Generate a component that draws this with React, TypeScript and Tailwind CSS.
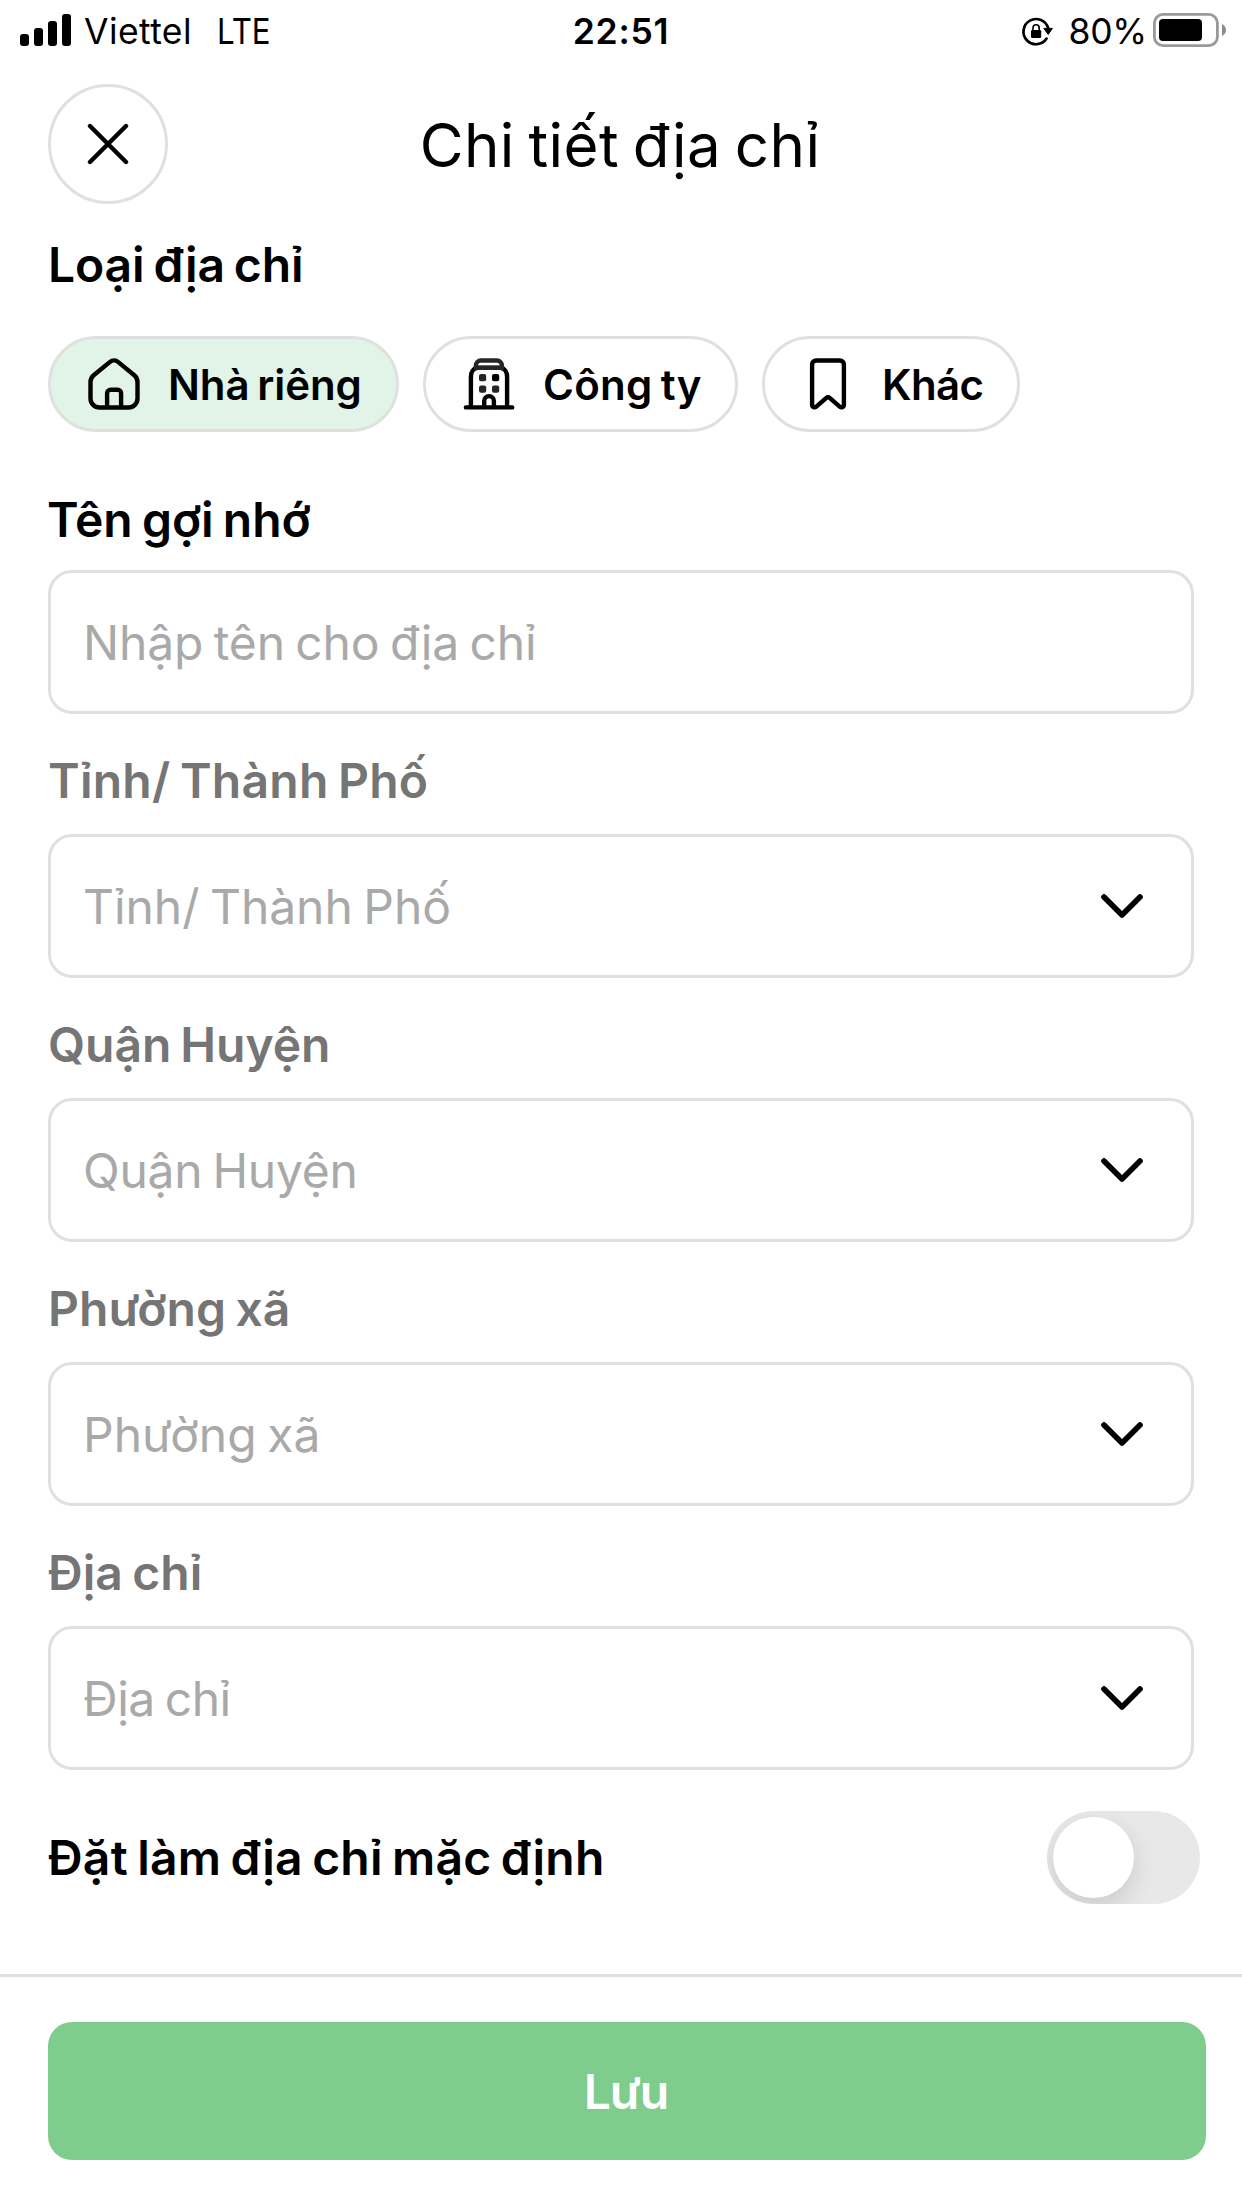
import React, { useState } from "react";

function SignalBars() {
  return (
    <div className="flex h-8 items-end gap-[5px]">
      <span className="h-3 w-[9px] rounded-[3px] bg-black" />
      <span className="h-[18px] w-[9px] rounded-[3px] bg-black" />
      <span className="h-[25px] w-[9px] rounded-[3px] bg-black" />
      <span className="h-8 w-[9px] rounded-[3px] bg-black" />
    </div>
  );
}

function RotationLock() {
  return (
    <svg className="h-8 w-8" viewBox="0 0 32 32" fill="none">
      <path d="M25.6 23.6A12.6 12.6 0 1 1 27.2 13.2" stroke="#000" strokeWidth="2.7" strokeLinecap="round" />
      <path d="M22.8 13.4h8.6l-4.2 6z" fill="#000" stroke="#000" strokeWidth="1" strokeLinejoin="round" />
      <rect x="10" y="15" width="10.2" height="8" rx="1.2" fill="#000" />
      <path d="M12 15.5v-2.6a3.1 3.1 0 0 1 6.2 0v2.6" stroke="#000" strokeWidth="1.6" />
    </svg>
  );
}

function Battery() {
  return (
    <svg className="h-[34px] w-[74px]" viewBox="0 0 74 34" fill="none">
      <rect x="1.4" y="1.4" width="63" height="31.2" rx="8.6" stroke="#999" strokeWidth="2.8" />
      <rect x="6" y="6" width="43" height="22" rx="4" fill="#000" />
      <path d="M69 11c2.6 1.4 4 3.4 4 6s-1.400 4.600-4 6z" fill="#8c8c8c" />
    </svg>
  );
}

function StatusBar() {
  return (
    <div className="grid h-[62px] shrink-0 grid-cols-3 items-center text-[35.5px] leading-[60px]">
      <div className="flex items-center pl-5">
        <div className="-mt-0.5">
          <SignalBars />
        </div>
        <span className="ml-[13px] pt-0.5 tracking-[0.4px]">Viettel</span>
        <span className="ml-[25px] origin-left scale-x-88 pt-0.5">LTE</span>
      </div>
      <div className="pt-0.5 text-center font-semibold tracking-[0.7px]">22:51</div>
      <div className="flex items-center justify-end pr-[15px]">
        <RotationLock />
        <span className="mr-1.5 ml-[15px] pt-0.5 tracking-[-0.2px]">80%</span>
        <div className="-mt-0.5 flex">
          <Battery />
        </div>
      </div>
    </div>
  );
}

function HomeIcon() {
  return (
    <svg className="size-15 shrink-0" viewBox="0 0 60 60" fill="none" stroke="#000" strokeWidth="4.400" strokeLinejoin="round">
      <path d="M6.500 28.200c0-2.700 1.100-5.200 3.200-6.900L25.700 8.100a6.800 6.800 0 0 1 8.600 0l16 13.200c2.100 1.700 3.200 4.200 3.200 6.900v16.300a9 9 0 0 1-9 9h-29a9 9 0 0 1-9-9z" />
      <path d="M23.100 53.500V39.300a3.500 3.500 0 0 1 3.500-3.500h7a3.500 3.500 0 0 1 3.500 3.500v14.200" />
    </svg>
  );
}

function BuildingIcon() {
  return (
    <svg className="size-15 shrink-0" viewBox="0 0 60 60" fill="none" strokeWidth="4.400" strokeLinecap="round" strokeLinejoin="round">
      <path d="M6.900 53.400h46.300M11.900 53V23c0-5 2.400-8.600 6.400-9.200h23.400c4 .6 6.400 4.200 6.400 9.200v30" stroke="#000" />
      <path d="M16.900 13.900v-2.400a5 5 0 0 1 5-5h16a5 5 0 0 1 5 5v2.400z" stroke="#252622" />
      <path d="M25.200 53v-6a4.850 4.850 0 0 1 9.700 0v6" stroke="#000" />
      <rect x="20" y="20" width="7.200" height="7.200" rx="2" fill="#252622" />
      <rect x="33" y="20" width="7.200" height="7.200" rx="2" fill="#000" />
      <rect x="20" y="31.500" width="7.200" height="7.200" rx="2" fill="#252622" />
      <rect x="33" y="31.500" width="7.200" height="7.200" rx="2" fill="#252622" />
    </svg>
  );
}

function BookmarkIcon() {
  return (
    <svg className="size-15 shrink-0" viewBox="0 0 60 60" fill="none" stroke="#000" strokeWidth="4.400" strokeLinejoin="round">
      <path d="M14.100 10.500a4 4 0 0 1 4-4h23.800a4 4 0 0 1 4 4v40.300c0 2.400-2.600 3.200-4.200 1.800l-9.800-8.500a2.900 2.900 0 0 0-3.800 0l-9.800 8.500c-1.600 1.400-4.200.6-4.200-1.800z" />
    </svg>
  );
}

function ChevronDown() {
  return (
    <svg className="h-6 w-[42px]" viewBox="0 0 42 24" fill="none" stroke="#000" strokeWidth="5.600" strokeLinecap="round" strokeLinejoin="round">
      <path d="M3 3l18 18L39 3" />
    </svg>
  );
}

const kinds = [
  { label: "Nhà riêng", icon: <HomeIcon />, box: "w-[351px]", spacing: "tracking-[-0.05px]" },
  { label: "Công ty", icon: <BuildingIcon />, box: "w-[315px]", spacing: "tracking-[0.3px]" },
  { label: "Khác", icon: <BookmarkIcon />, box: "w-[258px]", spacing: "tracking-[-0.6px]" },
];

const selects = [
  { label: "Tỉnh/ Thành Phố", labelSpacing: "tracking-[0.25px]", valueSpacing: "tracking-[-0.05px]" },
  { label: "Quận Huyện", labelSpacing: "tracking-[-0.05px]", valueSpacing: "tracking-[-0.3px]" },
  { label: "Phường xã", labelSpacing: "tracking-[0.1px]", valueSpacing: "tracking-normal" },
  { label: "Địa chỉ", labelSpacing: "tracking-[0.05px]", valueSpacing: "tracking-[-0.5px]" },
];

export default function App() {
  const [kind, setKind] = useState(0);
  const [isDefault, setIsDefault] = useState(false);

  return (
    <div className="flex h-[2208px] w-[1242px] flex-col overflow-hidden bg-white font-['Inter',sans-serif] text-black">
      <StatusBar />

      <header className="mt-[22px] grid h-[120px] shrink-0 grid-cols-[120px_1fr_120px] items-center px-12">
        <button className="flex size-[120px] items-center justify-center rounded-full border-3 border-[#e0e0e0]">
          <svg className="size-[42px]" viewBox="0 0 42 42" stroke="#000" strokeWidth="4.400" strokeLinecap="round">
            <path d="M3 3l36 36M39 3L3 39" />
          </svg>
        </button>
        <h1 className="pt-0.5 pr-0.5 text-center text-[60px] leading-[72px] tracking-[0.44px] [word-spacing:-3.6px]">Chi tiết địa chỉ</h1>
      </header>

      <main className="flex flex-col px-12 [word-spacing:-2.9px]">
        <h2 className="mt-[31px] h-[60px] text-5xl leading-[60px] font-semibold tracking-[-0.13px]">Loại địa chỉ</h2>
        <div className="mt-[41px] flex gap-6">
          {kinds.map((k, i) => (
            <button
              key={k.label}
              onClick={() => setKind(i)}
              className={`flex h-24 items-center gap-6 rounded-full border-3 border-[#e0e0e0] pl-[33px] text-[42px] font-semibold whitespace-nowrap [word-spacing:-2.9px] ${k.box} ${k.spacing} ${kind === i ? "bg-[#e2f4e8]" : "bg-white"}`}
            >
              {k.icon}
              <span className="pt-px leading-[60px]">{k.label}</span>
            </button>
          ))}
        </div>

        <label className="mt-[58px] -ml-px h-[60px] text-5xl leading-[60px] font-semibold">Tên gợi nhớ</label>
        <div className="mt-5 flex h-36 items-center rounded-3xl border-3 border-[#e0e0e0] pt-0.5 pl-8 text-5xl leading-[60px] tracking-[-0.15px] text-[#a9a9a9]">
          Nhập tên cho địa chỉ
        </div>

        {selects.map((s) => (
          <div key={s.label} className="flex flex-col pt-[37px]">
            <label className={`h-[60px] text-5xl leading-[60px] font-semibold text-[#757575] ${s.labelSpacing}`}>{s.label}</label>
            <div className="mt-[23px] flex h-36 items-center justify-between rounded-3xl border-3 border-[#e0e0e0] pr-12 pl-8">
              <span className={`pt-0.5 text-5xl leading-[60px] text-[#a9a9a9] ${s.valueSpacing}`}>{s.label}</span>
              <ChevronDown />
            </div>
          </div>
        ))}

        <div className="mt-[41px] -mr-1.5 flex h-[93px] items-center justify-between">
          <span className="text-5xl leading-[60px] font-semibold tracking-[0.2px]">Đặt làm địa chỉ mặc định</span>
          <button
            onClick={() => setIsDefault(!isDefault)}
            className={`flex h-[93px] w-[153px] items-center overflow-hidden rounded-full bg-[#e8e8e8] px-1.5 ${isDefault ? "justify-end" : "justify-start"}`}
          >
            <span className="size-[81px] rounded-full bg-white shadow-[0px_9px_24px_rgba(0,0,0,0.13)]" />
          </button>
        </div>
      </main>

      <footer className="mt-[70px] grow border-t-3 border-[#e0e0e0] pt-[45px] pr-9 pl-12">
        <button className="flex h-[138px] w-full items-center justify-center rounded-3xl bg-[#7fcd8c] pt-px pr-0.5 text-5xl leading-[60px] font-semibold tracking-[-1px] text-white">
          Lưu
        </button>
      </footer>
    </div>
  );
}
